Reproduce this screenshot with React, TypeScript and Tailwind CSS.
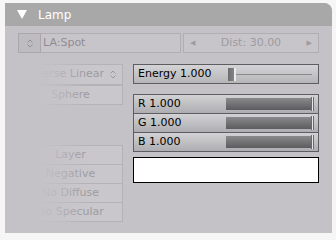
import React from 'react'

const font = { fontFamily: '"DejaVu Sans", sans-serif' }

function UpDown({ className }: { className?: string }) {
  return (
    <svg width="6" height="9" viewBox="0 0 6 9" className={className}>
      <path d="M0.5 3.5 L3 1 L5.5 3.5 M0.5 5.5 L3 8 L5.5 5.5" fill="none" stroke="currentColor" strokeWidth="1" />
    </svg>
  )
}

function GhostButton({ label, h = 20, className = '' }: { label: string; h?: number; className?: string }) {
  return (
    <div
      className={`flex items-center justify-center border border-[#b4b2b6] bg-[#c9c7cb] text-[11px] text-[#9d9ba1] -mt-px first:mt-0 ${className}`}
      style={{ height: h }}
    >
      {label}
    </div>
  )
}

function ColorSlider({ label }: { label: string }) {
  return (
    <div className="relative flex h-[20px] items-center border border-[#5e5e62] bg-gradient-to-b from-[#d2d2d4] to-[#aeaeb2] pl-[4px] text-[11px] text-black -mt-px first:mt-0">
      <span>{label}</span>
      <div className="absolute left-[92px] right-[6px] top-[3px] h-[12px] bg-gradient-to-b from-[#8a8a8c] to-[#5c5c5e]" />
      <div className="absolute right-[4px] top-[2px] h-[14px] w-[3px] border-x border-[#6a6a6a] bg-[#e6e6e6]" />
    </div>
  )
}

export default function App() {
  return (
    <div className="h-[240px] w-[336px] overflow-hidden bg-[#f6f6f6] pl-[5px] pt-[3px]" style={font}>
      <div className="h-[230px] w-[327px] overflow-hidden rounded-tr-[8px] bg-[#c4c2c7]">
        <div className="flex h-[23px] items-center bg-[#a8a8a9] pl-[12px] text-[12px] text-white">
          <svg width="10" height="9" viewBox="0 0 10 9" className="mr-[11px]">
            <path d="M0 0 H10 L5 9 Z" fill="white" />
          </svg>
          <span>Lamp</span>
        </div>

        <div className="relative pl-[13px] pt-[7px]">
          {/* row 1 */}
          <div className="flex h-[20px] text-[11px]">
            <div className="flex w-[23px] items-center justify-center border border-[#a9a7ab] bg-[#bebcc1] text-[#909094]">
              <UpDown />
            </div>
            <div className="flex w-[140px] items-center border border-l-0 border-[#b0aeb2] bg-[#c7c5ca] pl-[2px] text-[#8f8d93]">
              LA:Spot
            </div>
            <div className="ml-[2px] flex w-[136px] items-center justify-between border border-[#b0aeb2] bg-[#c7c5ca] px-[6px] text-[#9d9ba1]">
              <span className="text-[7px]">◀</span>
              <span>Dist: 30.00</span>
              <span className="text-[7px]">▶</span>
            </div>
          </div>

          <div className="mt-[11px] flex gap-[10px]">
            {/* left column */}
            <div className="flex w-[105px] flex-col">
              <div className="flex h-[21px] items-center justify-end gap-[6px] border border-[#b4b2b6] bg-[#c9c7cb] pr-[6px] text-[11px] text-[#9d9ba1]">
                <span>Inverse Linear</span>
                <UpDown />
              </div>
              <GhostButton label="Sphere" className="mt-0" />
              <div className="h-[41px]" />
              <GhostButton label="Layer" />
              <GhostButton label="Negative" />
              <GhostButton label="No Diffuse" />
              <GhostButton label="No Specular" />
            </div>

            {/* right column */}
            <div className="flex w-[186px] flex-col">
              <div className="relative flex h-[20px] items-center border border-[#5e5e62] bg-gradient-to-b from-[#d4d4d6] to-[#b6b6b9] pl-[4px] text-[11px] text-black">
                <span>Energy 1.000</span>
                <div className="absolute left-[94px] right-[6px] top-[9px] h-px bg-[#8a8a8c]" />
                <div className="absolute left-[94px] top-[3px] h-[13px] w-[7px] bg-gradient-to-r from-[#6c6c6c] to-[#8a8a8a]" />
                <div className="absolute left-[100px] top-[3px] h-[13px] w-[2px] bg-[#ececec]" />
              </div>
              <div className="mt-[10px] flex flex-col">
                <ColorSlider label="R 1.000" />
                <ColorSlider label="G 1.000" />
                <ColorSlider label="B 1.000" />
              </div>
              <div className="mt-[5px] h-[26px] border border-black bg-white" />
            </div>
          </div>

          {/* fade over the left edge of the inactive buttons */}
          <div className="pointer-events-none absolute left-0 top-[38px] h-[170px] w-[80px] bg-gradient-to-r from-[#c4c2c7] from-40% via-[#c4c2c7]/70 via-65% to-transparent" />
        </div>
      </div>
    </div>
  )
}
